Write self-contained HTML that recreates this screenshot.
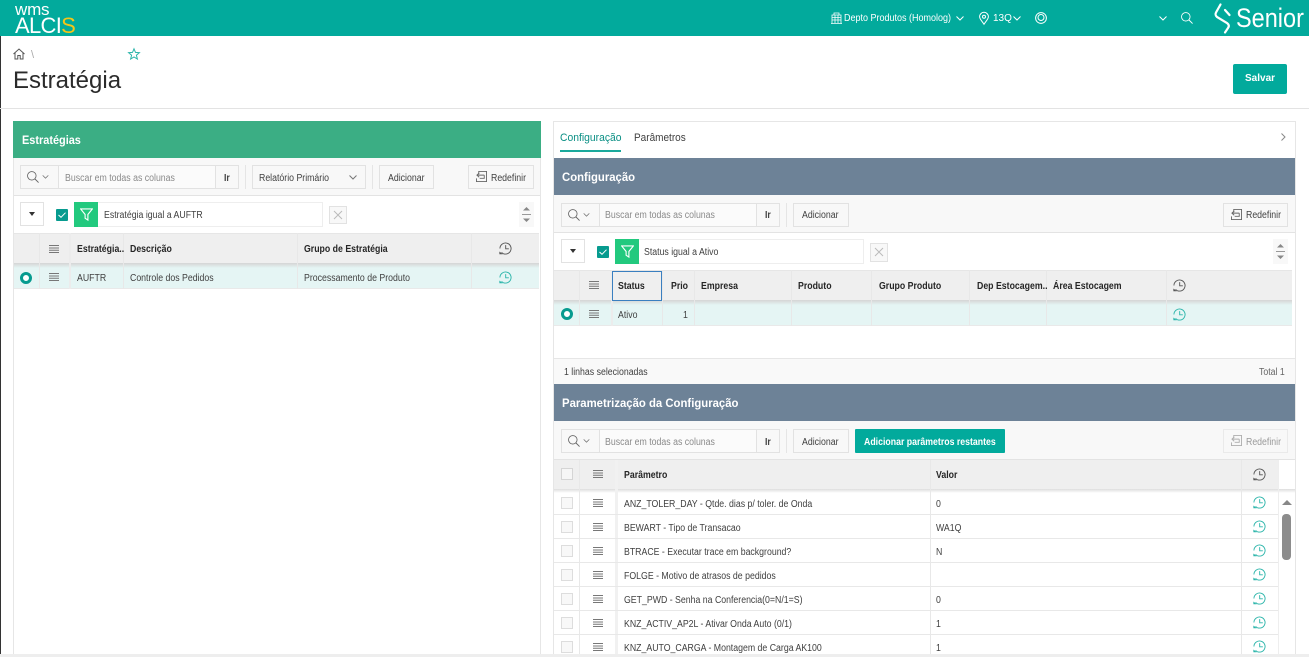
<!DOCTYPE html>
<html lang="pt-BR"><head><meta charset="utf-8"><title>Estratégia</title>
<style>
html,body{margin:0;padding:0;background:#fff}
body{width:1309px;height:657px;position:relative;overflow:hidden;font-family:"Liberation Sans",sans-serif;color:#404040;font-size:10px}
.a,.t,.b{position:absolute;box-sizing:border-box}
.t{white-space:nowrap;line-height:14px;margin-top:1px;transform:scaleX(.875);transform-origin:0 50%}
.n{transform:none}
.s{transform:scaleX(.945);margin-top:0}
.b{border:1px solid #e2e2e2;background:#f8f8f8}
.h{font-weight:bold;color:#262626}
.g{color:#8a8a8a}
svg{position:absolute;overflow:visible}
</style></head><body>
<svg width="0" height="0" style="position:absolute"><defs>
<symbol id="menu" viewBox="0 0 10 8"><path d="M0 .5H10M0 3H10M0 5.200H10M0 7.500H10" stroke="#777" stroke-width="1" fill="none"/></symbol>
<symbol id="clock" viewBox="0 0 14 14"><path d="M2.700 11.200A6 6 0 1 0 1 7M7.200 3.400V7.300H10.600" fill="none" stroke="currentColor" stroke-width="1"/><path d="M.4 10.200L4.200 13.200H.4Z" fill="currentColor"/></symbol>
<symbol id="search" viewBox="0 0 14 14"><circle cx="5.600" cy="5.600" r="5" fill="none" stroke="currentColor"/><path d="M9.200 9.200L13.500 13.500" stroke="currentColor" stroke-width="1.100"/></symbol>
<symbol id="reset" viewBox="0 0 12 12"><path d="M3 3.500V.5H11.500V11.500H.5V8" fill="none" stroke="#666"/><path d="M1 4.500 H9 M3.500 2.200 L1 4.500 L3.500 6.800 M9 4.500 V8 H4" fill="none" stroke="#666"/></symbol>
<symbol id="funnel" viewBox="0 0 14 14"><path d="M.7 1H13.300L8.500 7V13L5.500 11V7Z" fill="none" stroke="#fff" stroke-width="1.200"/></symbol>
<symbol id="chev" viewBox="0 0 8 5"><path d="M.5 .5L4 4L7.500 .5" fill="none" stroke="currentColor"/></symbol>
</defs></svg>

<!-- top bar -->
<div class="a" style="left:0;top:0;width:1309px;height:36px;background:#02aa9c"></div>
<div class="t n" style="left:15px;top:1px;font-size:17px;line-height:15px;color:#fff;letter-spacing:-.2px">wms</div>
<div class="t n" style="left:15px;top:14px;font-size:22px;line-height:22px;color:#fff;letter-spacing:-.7px">ALCI<span style="color:#f5c518">S</span></div>
<svg style="left:831px;top:12px" width="11" height="12" viewBox="0 0 11 12"><path d="M1 11.500V3H10V11.500ZM3 3V1H8V3M0 11.500H11M1 5.500H10M1 8H10M4 3V11M7 3V11" fill="none" stroke="#fff" stroke-width=".8"/></svg>
<div class="t" style="left:844px;top:11px;color:#fff;font-size:10px;transform:scaleX(.9)">Depto Produtos (Homolog)</div>
<svg style="left:956px;top:16px;color:#fff" width="8" height="5"><use href="#chev"/></svg>
<svg style="left:979px;top:12px" width="10" height="13" viewBox="0 0 10 13"><path d="M5 12.300C3 9 .6 7 .6 4.700A4.400 4.400 0 0 1 9.400 4.700C9.400 7 7 9 5 12.300Z" fill="none" stroke="#fff"/><circle cx="5" cy="4.700" r="1.500" fill="none" stroke="#fff"/></svg>
<div class="t" style="left:993px;top:11px;color:#fff;transform:none">13Q</div>
<svg style="left:1013px;top:16px;color:#fff" width="8" height="5"><use href="#chev"/></svg>
<svg style="left:1035px;top:12px" width="12" height="12" viewBox="0 0 12 12"><circle cx="6" cy="6" r="5.400" fill="none" stroke="#fff"/><circle cx="6" cy="5.500" r="3" fill="none" stroke="#fff"/></svg>
<svg style="left:1159px;top:16px;color:#fff" width="8" height="5"><use href="#chev"/></svg>
<svg style="left:1181px;top:12px;color:#fff" width="12" height="12"><use href="#search"/></svg>
<svg style="left:1214px;top:3px" width="18" height="30" viewBox="0 0 18 30"><path d="M6.500 1.500L2 9.500C1 11.500 1.500 12.500 3 14L13 20C15 21.500 15.500 23 14 25L11 29.500M11 7L15.500 12" fill="none" stroke="#fff" stroke-width="2.200" stroke-linecap="round"/></svg>
<div class="t" style="left:1236px;top:2px;font-size:27px;line-height:32px;color:#fff;margin:0;transform:scaleX(.87)">Senior</div>

<!-- page head -->
<div class="a" style="left:0;top:36px;width:1px;height:621px;background:#333"></div>
<svg style="left:13px;top:48px" width="12" height="12" viewBox="0 0 12 12"><path d="M.5 6L6 1L11.500 6M2 5V11H4.800V7.500H7.200V11H10V5" fill="none" stroke="#555"/></svg>
<div class="t n" style="left:31px;top:47px;color:#aaa;font-size:11px">\</div>
<svg style="left:128px;top:48px" width="12" height="12" viewBox="0 0 12 12"><path d="M6 .8L7.500 4.400L11.400 4.700L8.400 7.200L9.400 11.100L6 9L2.600 11.100L3.600 7.200L.6 4.700L4.500 4.400Z" fill="none" stroke="#2bb5aa"/></svg>
<div class="t n" style="left:13px;top:64px;font-size:24px;line-height:32px;color:#2b2b2b">Estratégia</div>
<div class="a" style="left:1233px;top:64px;width:54px;height:30px;background:#02aa9c;border-radius:2px"></div>
<div class="t n" style="left:1245px;top:71px;color:#fff;font-weight:bold">Salvar</div>
<div class="a" style="left:0;top:108px;width:1309px;height:1px;background:#e3e3e3"></div>

<!-- LEFT PANEL -->
<div class="a" style="left:13px;top:121px;width:528px;height:534px;border:1px solid #e6e6e6;border-top:0"></div>
<div class="a" style="left:13px;top:121px;width:528px;height:37px;background:#3bae84"></div>
<div class="t h s" style="left:22px;top:133px;font-size:12px;color:#fff;transform:scaleX(.91)">Estratégias</div>
<div class="a" style="left:14px;top:158px;width:526px;height:38px;background:#f8f8f8;border-bottom:1px solid #e3e3e3"></div>
<div class="b" style="left:20px;top:165px;width:39px;height:24px"></div>
<svg style="left:27px;top:171px;color:#666" width="12" height="12"><use href="#search"/></svg>
<svg style="left:42px;top:175px;color:#777" width="7" height="4"><use href="#chev"/></svg>
<div class="b" style="left:58px;top:165px;width:158px;height:24px;background:#fbfbfb"></div>
<div class="t g" style="left:65px;top:171px">Buscar em todas as colunas</div>
<div class="b" style="left:215px;top:165px;width:24px;height:24px"></div>
<div class="t h" style="left:224px;top:171px;color:#444">Ir</div>
<div class="a" style="left:245px;top:165px;width:1px;height:24px;background:#e5e5e5"></div>
<div class="b" style="left:252px;top:165px;width:114px;height:24px"></div>
<div class="t" style="left:259px;top:171px">Relatório Primário</div>
<svg style="left:349px;top:175px;color:#777" width="8" height="5"><use href="#chev"/></svg>
<div class="a" style="left:372px;top:165px;width:1px;height:24px;background:#e5e5e5"></div>
<div class="b" style="left:379px;top:165px;width:55px;height:24px"></div>
<div class="t" style="left:388px;top:171px">Adicionar</div>
<div class="b" style="left:468px;top:165px;width:66px;height:24px"></div>
<svg style="left:476px;top:171px" width="11" height="11"><use href="#reset"/></svg>
<div class="t" style="left:491px;top:171px">Redefinir</div>

<div class="b" style="left:20px;top:202px;width:24px;height:24px;background:#fff"></div>
<div class="a" style="left:29px;top:212px;border:3px solid transparent;border-top:4px solid #333;border-bottom:0"></div>
<div class="a" style="left:56px;top:209px;width:12px;height:12px;background:#079b8f;border-radius:1px"></div>
<svg style="left:58px;top:212px" width="8" height="6" viewBox="0 0 8 6"><path d="M.5 3L3 5.300L7.500 .7" fill="none" stroke="#fff"/></svg>
<div class="b" style="left:97px;top:202px;width:226px;height:25px;background:#fff;border-color:#eee"></div>
<div class="a" style="left:74px;top:202px;width:24px;height:25px;background:#22c97e"></div>
<svg style="left:80px;top:208px" width="13" height="13"><use href="#funnel"/></svg>
<div class="t" style="left:104px;top:208px">Estratégia igual a AUFTR</div>
<div class="b" style="left:329px;top:206px;width:18px;height:18px"></div>
<svg style="left:334px;top:211px" width="8" height="8"><path d="M0 0L8 8M8 0L0 8" stroke="#bbb"/></svg>
<div class="a" style="left:519px;top:202px;width:15px;height:25px;background:#f8f8f8"></div>
<svg style="left:522px;top:207px" width="9" height="15" viewBox="0 0 9 15"><path d="M4.500 0L8 3.500H1ZM4.500 15L1 11.500H8Z" fill="#888"/><path d="M0 7.500H9" stroke="#999"/></svg>

<div class="a" style="left:14px;top:233px;width:525px;height:31px;background:#efefef;border-top:1px solid #e6e6e6"></div>
<div class="a" style="left:14px;top:265px;width:525px;height:24px;background:#e5f5f4;border-bottom:1px solid #e9e9e9"></div>
<div class="a" style="left:14px;top:263px;width:525px;height:5px;background:linear-gradient(#d5d5d5,#e5f5f4)"></div>
<div class="a" style="left:39px;top:233px;width:1px;height:56px;background:#e8e8e8"></div>
<div class="a" style="left:69px;top:233px;width:2px;height:56px;background:#ececec"></div>
<div class="a" style="left:123px;top:233px;width:1px;height:56px;background:#e8e8e8"></div>
<div class="a" style="left:297px;top:233px;width:1px;height:56px;background:#e8e8e8"></div>
<div class="a" style="left:471px;top:233px;width:1px;height:56px;background:#e8e8e8"></div>
<svg style="left:49px;top:245px" width="10" height="8"><use href="#menu"/></svg>
<svg style="left:49px;top:273px" width="10" height="8"><use href="#menu"/></svg>
<div class="t h" style="left:77px;top:242px">Estratégia..</div>
<div class="t h" style="left:130px;top:242px">Descrição</div>
<div class="t h" style="left:304px;top:242px">Grupo de Estratégia</div>
<svg style="left:499px;top:242px;color:#555" width="13" height="13"><use href="#clock"/></svg>
<div class="a" style="left:20px;top:272px;width:12px;height:12px;border:3.500px solid #079b8f;border-radius:50%;background:#fff"></div>
<div class="t" style="left:77px;top:271px">AUFTR</div>
<div class="t" style="left:130px;top:271px">Controle dos Pedidos</div>
<div class="t" style="left:304px;top:271px">Processamento de Produto</div>
<svg style="left:499px;top:271px;color:#2bb5aa" width="13" height="13"><use href="#clock"/></svg>

<!-- RIGHT PANEL -->
<div class="a" style="left:553px;top:121px;width:743px;height:534px;border:1px solid #e6e6e6"></div>
<div class="t" style="left:560px;top:130px;font-size:11px;color:#0a8f84;transform:scaleX(.94)">Configuração</div>
<div class="a" style="left:560px;top:150px;width:61px;height:2px;background:#1aa99c"></div>
<div class="t" style="left:634px;top:130px;font-size:11px;transform:scaleX(.91)">Parâmetros</div>
<svg style="left:1281px;top:133px" width="5" height="8"><path d="M.5 .5L4 4L.5 7.500" fill="none" stroke="#888"/></svg>
<div class="a" style="left:554px;top:158px;width:741px;height:37px;background:#6d8297"></div>
<div class="t h s" style="left:562px;top:170px;font-size:12px;color:#fff">Configuração</div>
<div class="a" style="left:554px;top:195px;width:741px;height:38px;background:#f8f8f8;border-bottom:1px solid #e3e3e3"></div>
<div class="b" style="left:561px;top:203px;width:39px;height:24px"></div>
<svg style="left:568px;top:209px;color:#666" width="12" height="12"><use href="#search"/></svg>
<svg style="left:583px;top:213px;color:#777" width="7" height="4"><use href="#chev"/></svg>
<div class="b" style="left:599px;top:203px;width:158px;height:24px;background:#fbfbfb"></div>
<div class="t g" style="left:605px;top:208px">Buscar em todas as colunas</div>
<div class="b" style="left:756px;top:203px;width:24px;height:24px"></div>
<div class="t h" style="left:765px;top:208px;color:#444">Ir</div>
<div class="a" style="left:786px;top:203px;width:1px;height:24px;background:#e5e5e5"></div>
<div class="b" style="left:793px;top:203px;width:56px;height:24px"></div>
<div class="t" style="left:802px;top:208px">Adicionar</div>
<div class="b" style="left:1223px;top:203px;width:65px;height:24px"></div>
<svg style="left:1231px;top:209px" width="11" height="11"><use href="#reset"/></svg>
<div class="t" style="left:1246px;top:208px">Redefinir</div>

<div class="b" style="left:561px;top:239px;width:24px;height:24px;background:#fff"></div>
<div class="a" style="left:570px;top:249px;border:3px solid transparent;border-top:4px solid #333;border-bottom:0"></div>
<div class="a" style="left:597px;top:246px;width:12px;height:12px;background:#079b8f;border-radius:1px"></div>
<svg style="left:599px;top:249px" width="8" height="6" viewBox="0 0 8 6"><path d="M.5 3L3 5.300L7.500 .7" fill="none" stroke="#fff"/></svg>
<div class="b" style="left:638px;top:239px;width:226px;height:25px;background:#fff;border-color:#eee"></div>
<div class="a" style="left:615px;top:239px;width:24px;height:25px;background:#22c97e"></div>
<svg style="left:621px;top:245px" width="13" height="13"><use href="#funnel"/></svg>
<div class="t" style="left:644px;top:245px">Status igual a Ativo</div>
<div class="b" style="left:870px;top:243px;width:18px;height:19px"></div>
<svg style="left:875px;top:248px" width="8" height="8"><path d="M0 0L8 8M8 0L0 8" stroke="#bbb"/></svg>
<div class="a" style="left:1273px;top:239px;width:15px;height:25px;background:#f8f8f8"></div>
<svg style="left:1276px;top:244px" width="9" height="15" viewBox="0 0 9 15"><path d="M4.500 0L8 3.500H1ZM4.500 15L1 11.500H8Z" fill="#888"/><path d="M0 7.500H9" stroke="#999"/></svg>

<div class="a" style="left:554px;top:270px;width:738px;height:31px;background:#efefef;border-top:1px solid #e6e6e6"></div>
<div class="a" style="left:554px;top:302px;width:738px;height:24px;background:#e5f5f4;border-bottom:1px solid #e9e9e9"></div>
<div class="a" style="left:554px;top:300px;width:738px;height:5px;background:linear-gradient(#d5d5d5,#e5f5f4)"></div>
<div class="a" style="left:579px;top:270px;width:1px;height:56px;background:#e8e8e8"></div>
<div class="a" style="left:611px;top:270px;width:2px;height:56px;background:#ececec"></div>
<div class="a" style="left:662px;top:270px;width:1px;height:56px;background:#e8e8e8"></div>
<div class="a" style="left:694px;top:270px;width:1px;height:56px;background:#e8e8e8"></div>
<div class="a" style="left:791px;top:270px;width:1px;height:56px;background:#e8e8e8"></div>
<div class="a" style="left:871px;top:270px;width:1px;height:56px;background:#e8e8e8"></div>
<div class="a" style="left:969px;top:270px;width:1px;height:56px;background:#e8e8e8"></div>
<div class="a" style="left:1046px;top:270px;width:1px;height:56px;background:#e8e8e8"></div>
<div class="a" style="left:1166px;top:270px;width:1px;height:56px;background:#e8e8e8"></div>
<div class="a" style="left:612px;top:271px;width:50px;height:30px;border:1px solid #3a7fc0"></div>
<svg style="left:589px;top:281px" width="10" height="8"><use href="#menu"/></svg>
<svg style="left:589px;top:310px" width="10" height="8"><use href="#menu"/></svg>
<div class="t h" style="left:618px;top:279px">Status</div>
<div class="t h" style="left:671px;top:279px">Prio</div>
<div class="t h" style="left:701px;top:279px">Empresa</div>
<div class="t h" style="left:798px;top:279px">Produto</div>
<div class="t h" style="left:879px;top:279px">Grupo Produto</div>
<div class="t h" style="left:977px;top:279px">Dep Estocagem..</div>
<div class="t h" style="left:1053px;top:279px">Área Estocagem</div>
<svg style="left:1173px;top:279px;color:#555" width="13" height="13"><use href="#clock"/></svg>
<div class="a" style="left:561px;top:308px;width:12px;height:12px;border:3.500px solid #079b8f;border-radius:50%;background:#fff"></div>
<div class="t" style="left:618px;top:308px">Ativo</div>
<div class="t" style="left:683px;top:308px">1</div>
<svg style="left:1173px;top:308px;color:#2bb5aa" width="13" height="13"><use href="#clock"/></svg>

<div class="a" style="left:554px;top:358px;width:741px;height:26px;background:#f9f9f9;border-top:1px solid #e6e6e6"></div>
<div class="t" style="left:564px;top:365px">1 linhas selecionadas</div>
<div class="t" style="left:1259px;top:365px;color:#666">Total 1</div>

<div class="a" style="left:554px;top:384px;width:741px;height:37px;background:#6d8297"></div>
<div class="t h s" style="left:562px;top:396px;font-size:12px;color:#fff">Parametrização da Configuração</div>
<div class="a" style="left:554px;top:421px;width:741px;height:39px;background:#f8f8f8;border-bottom:1px solid #e3e3e3"></div>
<div class="b" style="left:561px;top:429px;width:39px;height:24px"></div>
<svg style="left:568px;top:435px;color:#666" width="12" height="12"><use href="#search"/></svg>
<svg style="left:583px;top:439px;color:#777" width="7" height="4"><use href="#chev"/></svg>
<div class="b" style="left:599px;top:429px;width:158px;height:24px;background:#fbfbfb"></div>
<div class="t g" style="left:605px;top:435px">Buscar em todas as colunas</div>
<div class="b" style="left:756px;top:429px;width:24px;height:24px"></div>
<div class="t h" style="left:765px;top:435px;color:#444">Ir</div>
<div class="a" style="left:786px;top:429px;width:1px;height:24px;background:#e5e5e5"></div>
<div class="b" style="left:793px;top:429px;width:56px;height:24px"></div>
<div class="t" style="left:802px;top:435px">Adicionar</div>
<div class="a" style="left:855px;top:429px;width:150px;height:24px;background:#02aa9c;border-radius:1px"></div>
<div class="t" style="left:864px;top:435px;color:#fff;font-weight:bold">Adicionar parâmetros restantes</div>
<div class="b" style="left:1223px;top:429px;width:65px;height:24px;opacity:.6"></div>
<svg style="left:1231px;top:435px;opacity:.5" width="11" height="11"><use href="#reset"/></svg>
<div class="t" style="left:1246px;top:435px;color:#999">Redefinir</div>

<div class="a" style="left:554px;top:460px;width:724px;height:30px;background:#efefef"></div>
<div class="a" style="left:554px;top:489px;width:741px;height:4px;background:linear-gradient(#ddd,#fff)"></div>
<div class="a" style="left:579px;top:460px;width:1px;height:195px;background:#e8e8e8"></div>
<div class="a" style="left:615px;top:460px;width:3px;height:195px;background:#f1f1f1"></div>
<div class="a" style="left:930px;top:460px;width:1px;height:195px;background:#e8e8e8"></div>
<div class="a" style="left:1241px;top:460px;width:1px;height:195px;background:#e8e8e8"></div>
<div class="a" style="left:1278px;top:460px;width:1px;height:195px;background:#eee"></div>
<div class="t h" style="left:624px;top:468px">Parâmetro</div>
<div class="t h" style="left:936px;top:468px">Valor</div>
<div class="b" style="left:561px;top:468px;width:12px;height:12px;background:#f6f6f6;border-color:#d5d5d5"></div>
<svg style="left:593px;top:470px" width="10" height="8"><use href="#menu"/></svg>
<svg style="left:1253px;top:468px;color:#555" width="13" height="13"><use href="#clock"/></svg>

<div class="a" style="left:554px;top:514px;width:724px;height:1px;background:#e8e8e8"></div>
<div class="a" style="left:554px;top:538px;width:724px;height:1px;background:#e8e8e8"></div>
<div class="a" style="left:554px;top:562px;width:724px;height:1px;background:#e8e8e8"></div>
<div class="a" style="left:554px;top:586px;width:724px;height:1px;background:#e8e8e8"></div>
<div class="a" style="left:554px;top:610px;width:724px;height:1px;background:#e8e8e8"></div>
<div class="a" style="left:554px;top:634px;width:724px;height:1px;background:#e8e8e8"></div>

<div class="b" style="left:561px;top:497px;width:12px;height:12px;background:#f8f8f8;border-color:#ddd"></div>
<svg style="left:593px;top:499px" width="10" height="8"><use href="#menu"/></svg>
<div class="t" style="left:624px;top:497px">ANZ_TOLER_DAY - Qtde. dias p/ toler. de Onda</div>
<div class="t" style="left:936px;top:497px">0</div>
<svg style="left:1253px;top:496px;color:#2bb5aa" width="13" height="13"><use href="#clock"/></svg>

<div class="b" style="left:561px;top:521px;width:12px;height:12px;background:#f8f8f8;border-color:#ddd"></div>
<svg style="left:593px;top:523px" width="10" height="8"><use href="#menu"/></svg>
<div class="t" style="left:624px;top:521px">BEWART - Tipo de Transacao</div>
<div class="t" style="left:936px;top:521px">WA1Q</div>
<svg style="left:1253px;top:520px;color:#2bb5aa" width="13" height="13"><use href="#clock"/></svg>

<div class="b" style="left:561px;top:545px;width:12px;height:12px;background:#f8f8f8;border-color:#ddd"></div>
<svg style="left:593px;top:547px" width="10" height="8"><use href="#menu"/></svg>
<div class="t" style="left:624px;top:545px">BTRACE - Executar trace em background?</div>
<div class="t" style="left:936px;top:545px">N</div>
<svg style="left:1253px;top:544px;color:#2bb5aa" width="13" height="13"><use href="#clock"/></svg>

<div class="b" style="left:561px;top:569px;width:12px;height:12px;background:#f8f8f8;border-color:#ddd"></div>
<svg style="left:593px;top:571px" width="10" height="8"><use href="#menu"/></svg>
<div class="t" style="left:624px;top:569px">FOLGE - Motivo de atrasos de pedidos</div>
<svg style="left:1253px;top:568px;color:#2bb5aa" width="13" height="13"><use href="#clock"/></svg>

<div class="b" style="left:561px;top:593px;width:12px;height:12px;background:#f8f8f8;border-color:#ddd"></div>
<svg style="left:593px;top:595px" width="10" height="8"><use href="#menu"/></svg>
<div class="t" style="left:624px;top:593px">GET_PWD - Senha na Conferencia(0=N/1=S)</div>
<div class="t" style="left:936px;top:593px">0</div>
<svg style="left:1253px;top:592px;color:#2bb5aa" width="13" height="13"><use href="#clock"/></svg>

<div class="b" style="left:561px;top:617px;width:12px;height:12px;background:#f8f8f8;border-color:#ddd"></div>
<svg style="left:593px;top:619px" width="10" height="8"><use href="#menu"/></svg>
<div class="t" style="left:624px;top:617px">KNZ_ACTIV_AP2L - Ativar Onda Auto (0/1)</div>
<div class="t" style="left:936px;top:617px">1</div>
<svg style="left:1253px;top:616px;color:#2bb5aa" width="13" height="13"><use href="#clock"/></svg>

<div class="b" style="left:561px;top:641px;width:12px;height:12px;background:#f8f8f8;border-color:#ddd"></div>
<svg style="left:593px;top:643px" width="10" height="8"><use href="#menu"/></svg>
<div class="t" style="left:624px;top:641px">KNZ_AUTO_CARGA - Montagem de Carga AK100</div>
<div class="t" style="left:936px;top:641px">1</div>
<svg style="left:1253px;top:640px;color:#2bb5aa" width="13" height="13"><use href="#clock"/></svg>

<div class="a" style="left:1282px;top:500px;border:5px solid transparent;border-bottom:5px solid #888;border-top:0"></div>
<div class="a" style="left:1282px;top:514px;width:9px;height:46px;background:#8c8c8c;border-radius:4px"></div>

<div class="a" style="left:0;top:654px;width:1309px;height:3px;background:#eee"></div>
</body></html>
